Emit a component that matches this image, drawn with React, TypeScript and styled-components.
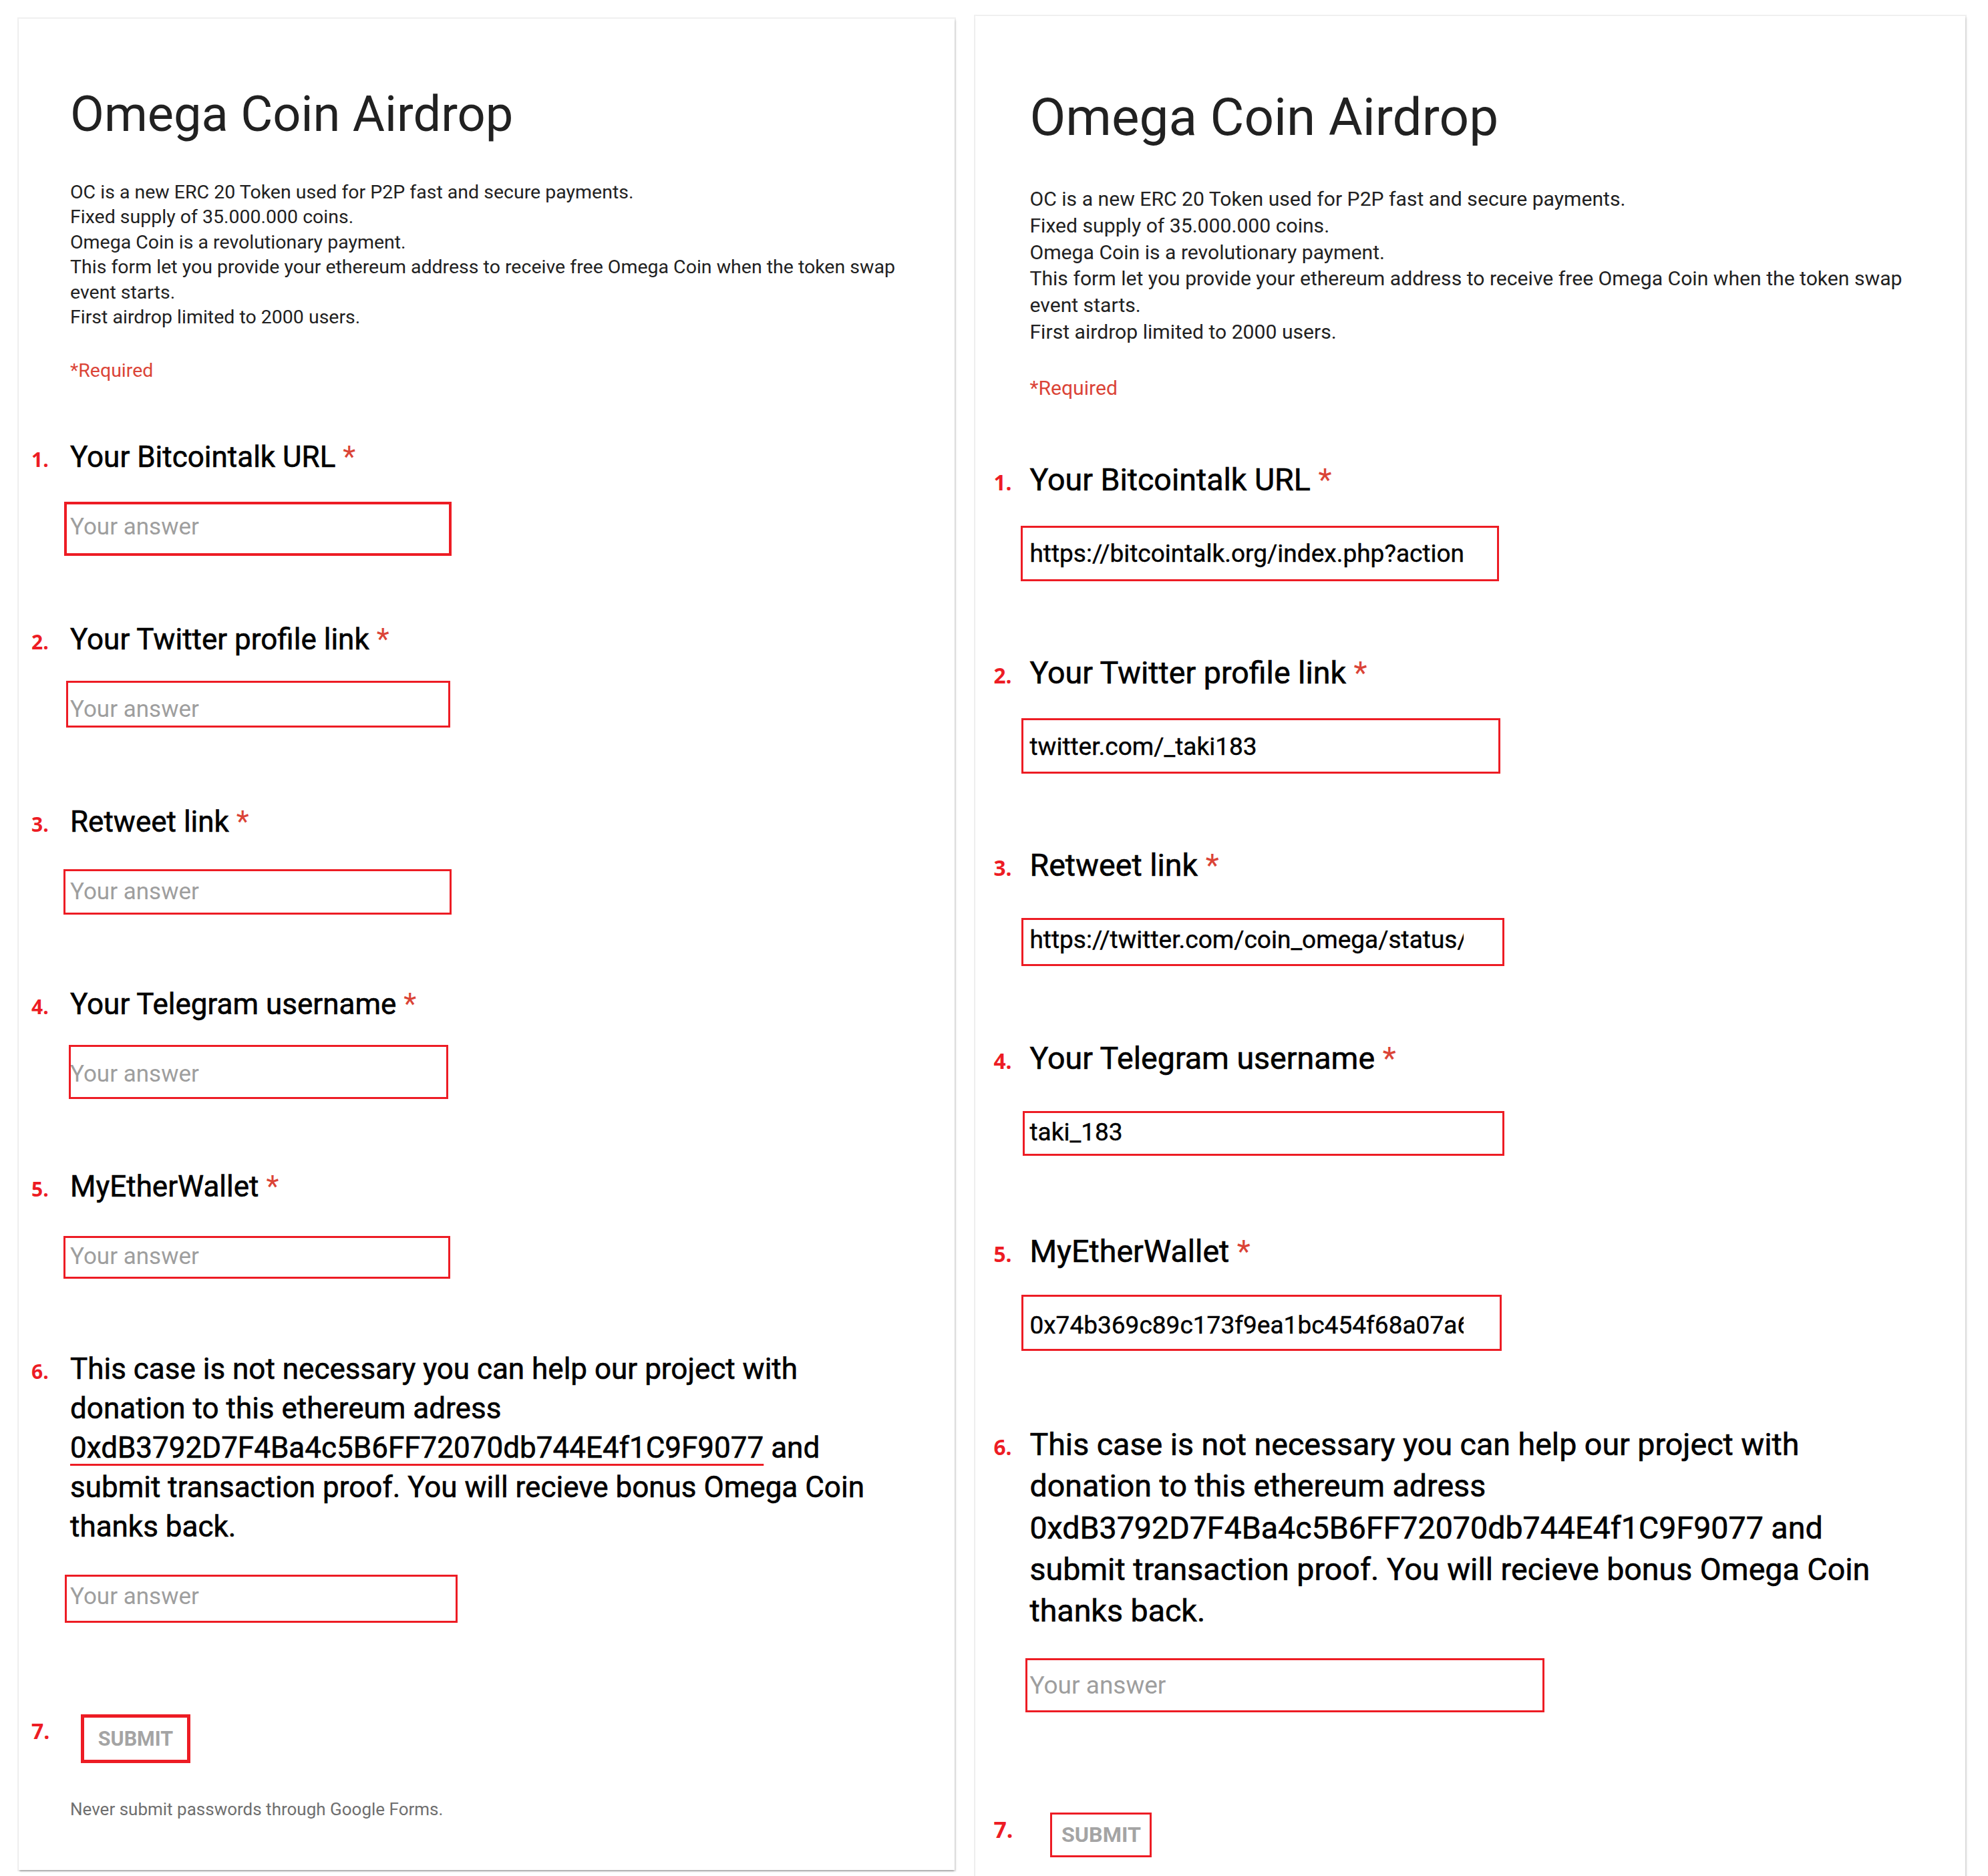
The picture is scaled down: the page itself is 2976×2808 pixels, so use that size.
import styled, { createGlobalStyle } from "styled-components";

// every size in the card template is written in "left card" pixels and
// multiplied by --k, the right screenshot is the same form a bit bigger
const u = (n: number) => `calc(${n}px * var(--k))`;

interface Mark {
  top: number;
  left: number;
  width: number;
  height: number;
  border?: number;
}

interface Field {
  label: string;
  value?: string;
  mark: Mark;
}

interface CardData {
  k: number;
  top: number;
  width: number;
  gutter: number;
  underline: boolean;
  footer: boolean;
  fields: Field[];
  donation: Mark;
  submit: { gap: number; left: number; width: number; height: number; border: number };
}

const GlobalStyle = createGlobalStyle`
  html, body {
    margin: 0;
    padding: 0;
    background: #fff;
    overflow: hidden;
  }
  body {
    font-family: Roboto, "Liberation Sans", Arial, sans-serif;
    -webkit-font-smoothing: antialiased;
  }
`;

const Page = styled.div`
  display: flex;
  align-items: flex-start;
  gap: 31px;
  padding-left: 28px;
  height: 2808px;
  overflow: hidden;
`;

const Card = styled.section<{ $k: number; $top: number; $w: number; $gutter: number }>`
  --k: ${(p) => p.$k};
  --gutter: ${(p) => p.$gutter}px;
  flex: none;
  box-sizing: border-box;
  width: ${(p) => p.$w}px;
  margin-top: ${(p) => p.$top}px;
  padding: ${u(97)} ${u(77)} ${u(75)};
  background: #fff;
  box-shadow: 0 3px 2px -1px rgba(0, 0, 0, 0.22), 0 0 0 2px rgba(0, 0, 0, 0.06),
    2px 2px 3px rgba(0, 0, 0, 0.1);
`;

const Title = styled.h1`
  margin: 0;
  font-size: ${u(74)};
  line-height: ${u(91)};
  font-weight: 400;
  color: #212121;
`;

const Description = styled.div`
  margin-top: ${u(52.5)};
  font-size: ${u(28.5)};
  line-height: ${u(37.5)};
  color: #212121;
`;

const Required = styled.div`
  margin-top: ${u(42)};
  font-size: ${u(28.5)};
  line-height: ${u(37.5)};
  color: #db4437;
`;

const Question = styled.div<{ $first?: boolean }>`
  display: grid;
  grid-template-columns: var(--gutter) 1fr;
  align-items: baseline;
  margin-left: calc(var(--gutter) * -1);
  margin-top: ${(p) => (p.$first ? u(81.5) : u(99))};
`;

const Num = styled.span`
  font-family: "Open Sans", "DejaVu Sans", sans-serif;
  font-weight: 700;
  font-size: ${u(30)};
  color: #ed1c24;
`;

const Label = styled.div`
  max-width: ${u(1230)};
  font-size: ${u(44)};
  line-height: ${u(59)};
  color: #000;
  -webkit-text-stroke: 0.6px #000;
`;

const Star = styled.span`
  color: #db4437;
  -webkit-text-stroke: 0;
`;

const Address = styled.span<{ $marked: boolean }>`
  text-decoration: ${(p) => (p.$marked ? "underline" : "none")};
  text-decoration-color: #ed1c24;
  text-decoration-thickness: 3px;
  text-underline-offset: 9px;
`;

const AnswerWrap = styled.div`
  grid-column: 2;
  position: relative;
  margin-top: ${u(35)};
  height: ${u(80)};
  padding-top: ${u(17.5)};
  box-sizing: border-box;
`;

const AnswerInput = styled.input`
  display: block;
  width: ${u(614)};
  height: ${u(45)};
  padding: 0;
  border: none;
  outline: none;
  background: transparent;
  font-family: Roboto, "Liberation Sans", Arial, sans-serif;
  font-size: ${u(35)};
  line-height: ${u(45)};
  color: #000;
  -webkit-text-stroke: 0.4px #000;

  &::placeholder {
    color: #9e9e9e;
    opacity: 1;
    -webkit-text-stroke: 0;
  }
`;

// the red rectangles are hand drawn notes laid over the form
const RedMark = styled.div<{ $m: Mark }>`
  position: absolute;
  top: ${(p) => p.$m.top}px;
  left: ${(p) => p.$m.left}px;
  width: ${(p) => p.$m.width}px;
  height: ${(p) => p.$m.height}px;
  box-sizing: border-box;
  border: ${(p) => p.$m.border ?? 3}px solid #ed1c24;
  pointer-events: none;
`;

const SubmitRow = styled.div<{ $gap: number }>`
  display: grid;
  grid-template-columns: var(--gutter) 1fr;
  align-items: start;
  margin-left: calc(var(--gutter) * -1);
  margin-top: ${(p) => p.$gap}px;
`;

const SubmitNum = styled(Num)`
  font-size: ${u(32)};
  line-height: 1;
  margin-top: ${u(9)};
`;

const SubmitButton = styled.button<{ $left: number; $w: number; $h: number; $b: number }>`
  justify-self: start;
  margin-left: ${(p) => p.$left}px;
  width: ${(p) => p.$w}px;
  height: ${(p) => p.$h}px;
  box-sizing: border-box;
  border: ${(p) => p.$b}px solid #ed1c24;
  background: #fff;
  padding: 0;
  font-family: Roboto, "Liberation Sans", Arial, sans-serif;
  font-weight: 700;
  font-size: ${u(30.5)};
  color: #a4a4a4;
  text-transform: uppercase;
`;

const Footer = styled.div`
  margin-top: ${u(53)};
  font-size: ${u(26)};
  line-height: ${u(32)};
  color: #6f6f6f;
`;

const ADDRESS = "0xdB3792D7F4Ba4c5B6FF72070db744E4f1C9F9077";

const labels = [
  "Your Bitcointalk URL",
  "Your Twitter profile link",
  "Retweet link",
  "Your Telegram username",
  "MyEtherWallet",
];

const cards: CardData[] = [
  {
    k: 1,
    top: 28,
    width: 1401,
    gutter: 58,
    underline: true,
    footer: true,
    fields: [
      { label: labels[0], mark: { top: 2, left: -9, width: 580, height: 81, border: 4 } },
      { label: labels[1], mark: { top: -3, left: -6, width: 575, height: 70 } },
      { label: labels[2], mark: { top: 6, left: -10, width: 581, height: 68 } },
      { label: labels[3], mark: { top: -4, left: -2, width: 568, height: 81 } },
      { label: labels[4], mark: { top: 9, left: -10, width: 579, height: 64 } },
    ],
    donation: { top: 7, left: -8, width: 588, height: 72 },
    submit: { gap: 136, left: 16, width: 164, height: 73, border: 5 },
  },
  {
    k: 1.058,
    top: 24,
    width: 1482,
    gutter: 54,
    underline: false,
    footer: false,
    fields: [
      {
        label: labels[0],
        value: "https://bitcointalk.org/index.php?action=profile;u=1",
        mark: { top: 1, left: -13, width: 716, height: 83 },
      },
      {
        label: labels[1],
        value: "twitter.com/_taki183",
        mark: { top: 0, left: -12, width: 717, height: 83 },
      },
      {
        label: labels[2],
        value: "https://twitter.com/coin_omega/status/",
        mark: { top: 10, left: -12, width: 723, height: 72 },
      },
      { label: labels[3], value: "taki_183", mark: { top: 10, left: -10, width: 721, height: 67 } },
      {
        label: labels[4],
        value: "0x74b369c89c173f9ea1bc454f68a07a6d1f2e",
        mark: { top: -3, left: -12, width: 719, height: 84 },
      },
    ],
    donation: { top: 2, left: -6, width: 777, height: 81 },
    submit: { gap: 148, left: 31, width: 152, height: 67, border: 3 },
  },
];

function FormCard({ data }: { data: CardData }) {
  return (
    <Card $k={data.k} $top={data.top} $w={data.width} $gutter={data.gutter}>
      <Title>Omega Coin Airdrop</Title>
      <Description>
        OC is a new ERC 20 Token used for P2P fast and secure payments.
        <br />
        Fixed supply of 35.000.000 coins.
        <br />
        Omega Coin is a revolutionary payment.
        <br />
        This form let you provide your ethereum address to receive free Omega Coin when the token
        swap event starts.
        <br />
        First airdrop limited to 2000 users.
      </Description>
      <Required>*Required</Required>

      {data.fields.map((f, i) => (
        <Question key={f.label} $first={i === 0}>
          <Num>{i + 1}.</Num>
          <Label>
            {f.label} <Star>*</Star>
          </Label>
          <AnswerWrap>
            <AnswerInput readOnly placeholder="Your answer" value={f.value ?? ""} />
            <RedMark $m={f.mark} />
          </AnswerWrap>
        </Question>
      ))}

      <Question>
        <Num>6.</Num>
        <Label>
          This case is not necessary you can help our project with donation to this ethereum adress{" "}
          <Address $marked={data.underline}>{ADDRESS}</Address> and submit transaction proof. You
          will recieve bonus Omega Coin thanks back.
        </Label>
        <AnswerWrap>
          <AnswerInput readOnly placeholder="Your answer" value="" />
          <RedMark $m={data.donation} />
        </AnswerWrap>
      </Question>

      <SubmitRow $gap={data.submit.gap}>
        <SubmitNum>7.</SubmitNum>
        <SubmitButton
          type="button"
          $left={data.submit.left}
          $w={data.submit.width}
          $h={data.submit.height}
          $b={data.submit.border}
        >
          Submit
        </SubmitButton>
      </SubmitRow>

      {data.footer && <Footer>Never submit passwords through Google Forms.</Footer>}
    </Card>
  );
}

export default function App() {
  return (
    <>
      <GlobalStyle />
      <Page>
        {cards.map((c) => (
          <FormCard key={c.width} data={c} />
        ))}
      </Page>
    </>
  );
}
